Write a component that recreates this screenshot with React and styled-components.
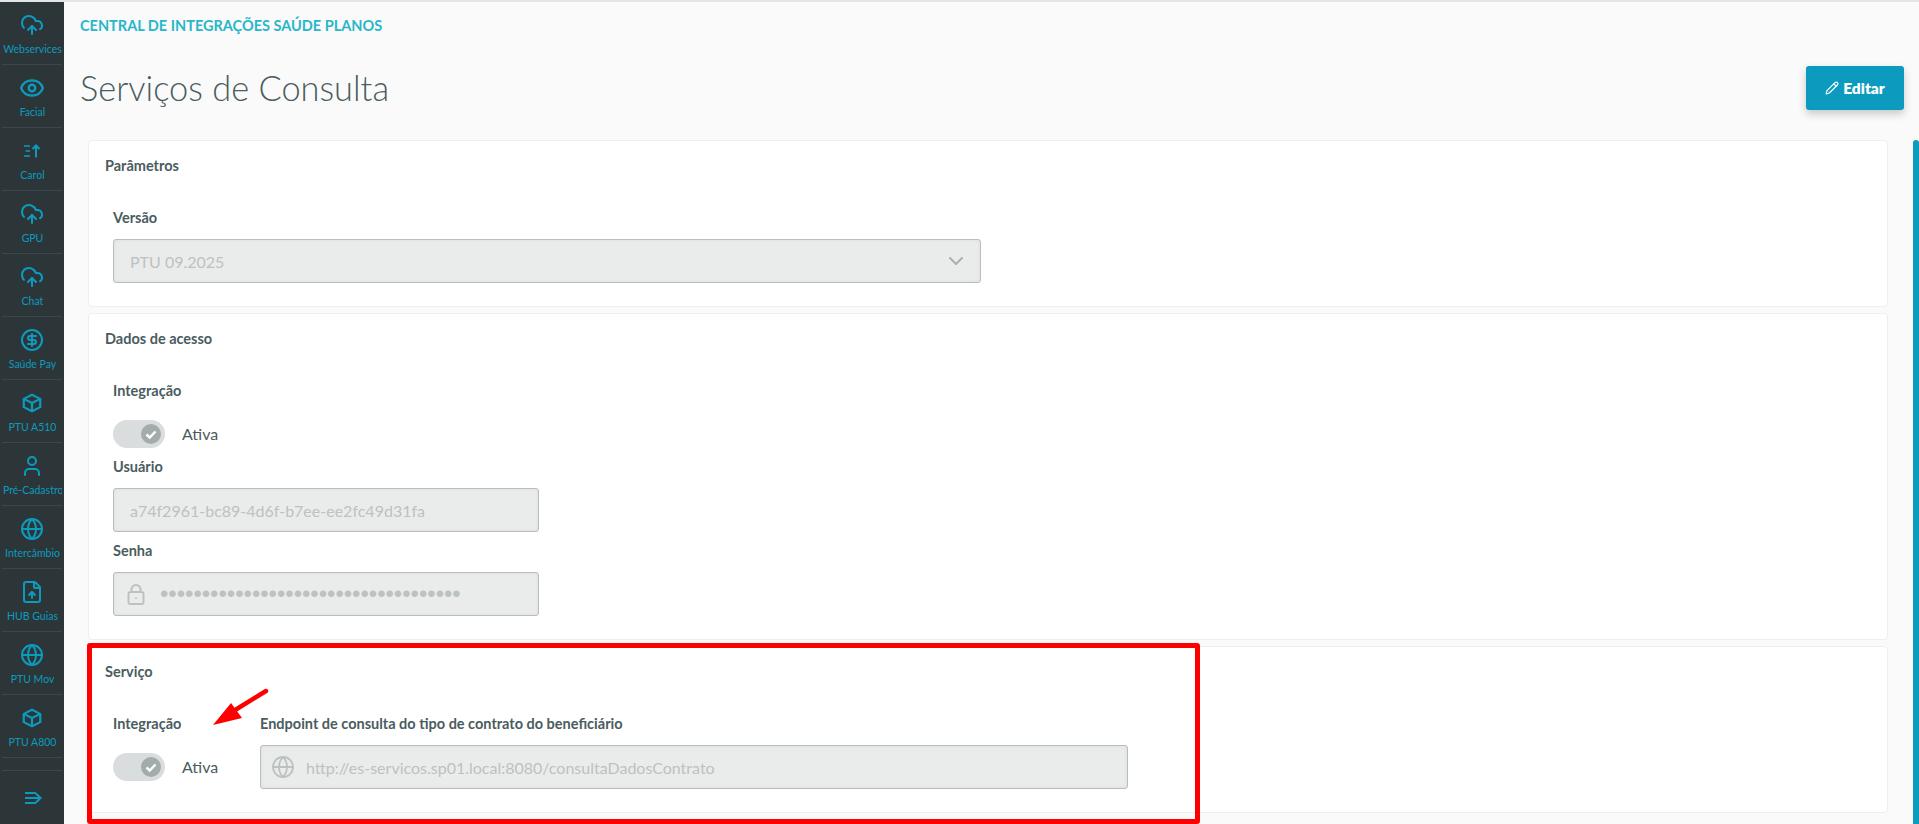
import React from "react";
import styled, { createGlobalStyle } from "styled-components";
import { CloudUpload, Eye, CircleDollarSign, User, Globe, FileUp, Pencil, ChevronDown } from "lucide-react";

const GlobalStyle = createGlobalStyle`
  html, body { margin: 0; padding: 0; height: 100%; overflow: hidden; }
  body { font-family: "Lato", "Open Sans", sans-serif; background: #fafafa; color: #4a5c60; }
  * { box-sizing: border-box; }
`;

const Page = styled.div`
  height: 100vh;
  display: flex;
  flex-direction: column;
  overflow: hidden;
  position: relative;
`;

const TopLine = styled.div`
  height: 2px;
  flex: none;
  background: #e4e6e6;
`;

const Body = styled.div`
  flex: 1;
  display: flex;
  min-height: 0;
`;

const Sidebar = styled.nav`
  width: 64px;
  flex: none;
  background: #2c3639;
  display: flex;
  flex-direction: column;
  color: #0c9abe;
`;

const NavItem = styled.a`
  height: 63px;
  flex: none;
  margin: 0 2px;
  padding-top: 11px;
  display: flex;
  flex-direction: column;
  align-items: center;
  border-bottom: 1px solid #3d4749;
  overflow: hidden;
`;

const NavIcon = styled.span`
  height: 24px;
  display: flex;
  align-items: center;
  justify-content: center;
`;

const NavLabel = styled.span`
  align-self: stretch;
  margin-top: 5px;
  padding-left: 1px;
  overflow: hidden;
  font-size: 10.5px;
  font-weight: 400;
  line-height: 14px;
  text-align: center;
  white-space: nowrap;
`;

const NavFooter = styled.div`
  margin: 12px 2px 0;
  border-top: 1px solid #3d4749;
  flex: 1;
  display: flex;
  align-items: center;
  justify-content: center;
  padding-left: 3px;
`;

const Main = styled.main`
  flex: 1;
  min-width: 0;
  padding: 0 9px 0 16px;
`;

const Breadcrumb = styled.div`
  height: 46px;
  display: flex;
  align-items: center;
  font-size: 14.5px;
  font-weight: 700;
  color: #29b6c9;
`;

const HeaderRow = styled.header`
  height: 92px;
  display: flex;
  align-items: flex-start;
  justify-content: space-between;
`;

const Title = styled.h1`
  margin: 18px 0 0;
  font-size: 34.4px;
  font-weight: 300;
  line-height: 44px;
  color: #4a5c60;
`;

const EditButton = styled.button`
  height: 44px;
  width: 98px;
  margin-top: 18px;
  border: 0;
  border-radius: 3px;
  background: #0c9abe;
  color: #fff;
  font: 800 15.5px "Lato", sans-serif;
  display: flex;
  align-items: center;
  justify-content: center;
  gap: 4px;
  box-shadow: 0 4px 8px rgba(0, 0, 0, 0.2);
`;

const Cards = styled.div`
  margin: 0 16px 0 8px;
  display: flex;
  flex-direction: column;
  gap: 6px;
`;

const Card = styled.section`
  height: ${(p) => p.$height}px;
  background: #fff;
  border: 1px solid #eeeeee;
  border-radius: 4px;
  padding: 15px 16px;
`;

const CardTitle = styled.h2`
  margin: 0 0 32px;
  font-size: 14.5px;
  font-weight: 700;
  line-height: 20px;
  color: #4a5c60;
`;

const Fields = styled.div`
  display: flex;
  flex-direction: column;
  padding-left: 8px;
`;

const FieldRow = styled.div`
  display: grid;
  grid-template-columns: 147px 868px;
  padding-left: 8px;
`;

const Label = styled.label`
  display: block;
  height: 20px;
  margin-bottom: ${(p) => p.$gap ?? 11}px;
  font-size: 14.5px;
  font-weight: 700;
  line-height: 20px;
  color: #4a5c60;
`;

const ToggleRow = styled.div`
  display: flex;
  align-items: center;
  gap: 17px;
  height: 28px;
  margin: ${(p) => p.$margin};
`;

const ToggleTrack = styled.span`
  width: 52px;
  height: 28px;
  border-radius: 14px;
  background: #dadddd;
  display: flex;
  align-items: center;
  justify-content: flex-end;
  padding-right: 4px;
`;

const ToggleText = styled.span`
  margin-bottom: 2px;
  font-size: 16px;
  color: #4a5c60;
`;

const DisabledBox = styled.div`
  width: ${(p) => p.$width}px;
  height: 44px;
  background: #eaecec;
  border: 1px solid #b8bdbd;
  border-radius: 3px;
  box-shadow: inset 0 0 4px rgba(0, 0, 0, 0.06);
  display: flex;
  align-items: center;
  padding: 0 16px;
  font-size: 16px;
  color: #bcc1c1;
  margin-bottom: ${(p) => p.$bottom ?? 0}px;
`;

const BoxIcon = styled.span`
  display: flex;
  margin: 0 ${(p) => p.$after}px 0 ${(p) => p.$before}px;
  color: #bcc1c1;
`;

const BoxEnd = styled.span`
  margin: 0 -4px 0 auto;
  display: flex;
  color: #a8b0b0;
`;

const Dots = styled.span`
  font-family: "Liberation Sans", sans-serif;
  font-size: 24px;
  line-height: 24px;
  letter-spacing: -0.05px;
`;

const ScrollThumb = styled.div`
  width: 6px;
  flex: none;
  margin-top: 138px;
  background: #0c9abe;
  border-radius: 3px 3px 0 0;
`;

const Highlight = styled.div`
  position: absolute;
  left: 87px;
  top: 643px;
  width: 1113px;
  height: 181px;
  border: 5px solid #ff0000;
  border-radius: 3px;
  pointer-events: none;
`;

const ArrowMark = styled.svg`
  position: absolute;
  left: 205px;
  top: 685px;
  pointer-events: none;
`;

const CubeIcon = () => (
  <svg width="22" height="22" viewBox="0 0 24 24" fill="none" stroke="currentColor" strokeWidth="2.4" strokeLinejoin="round">
    <path d="M12 3 3 7.5v9L12 21l9-4.5v-9L12 3Z" />
    <path d="M3 7.5 12 12l9-4.5M12 12v9" />
  </svg>
);

const ListUpIcon = () => (
  <svg width="18" height="14" viewBox="0 0 18 14" fill="none" stroke="currentColor" strokeWidth="1.7">
    <path d="M1 2h6M2.5 7h4.5M1 12h6" />
    <path d="M13 13.5V1.5M9.5 5l3.5-3.5L16.5 5" strokeWidth="2" />
  </svg>
);

const CheckKnob = () => (
  <svg width="20" height="20" viewBox="0 0 20 20">
    <circle cx="10" cy="10" r="10" fill="#a3abab" />
    <path d="M5.5 10.5 8.7 13.5 14.5 7.5" fill="none" stroke="#fff" strokeWidth="2.4" />
  </svg>
);

const ExpandIcon = () => (
  <svg width="17" height="14" viewBox="0 0 17 14" fill="none" stroke="currentColor" strokeWidth="2">
    <path d="M0 2h11M0 7h15M0 12h11M11 2.5 15.5 7 11 11.5" />
  </svg>
);

const LockIcon = () => (
  <svg width="18" height="21" viewBox="0 0 18 21" fill="none" stroke="currentColor" strokeWidth="2">
    <rect x="1.5" y="8" width="15" height="12" rx="2" />
    <path d="M4.5 8V5.5a4.5 4.5 0 0 1 9 0V8" />
    <circle cx="9" cy="14" r="1" fill="currentColor" stroke="none" />
  </svg>
);

const Toggle = ({ margin }) => (
  <ToggleRow $margin={margin}>
    <ToggleTrack>
      <CheckKnob />
    </ToggleTrack>
    <ToggleText>Ativa</ToggleText>
  </ToggleRow>
);

const navItems = [
  { label: "Webservices", icon: <CloudUpload size={24} /> },
  { label: "Facial", icon: <Eye size={26} strokeWidth={2.2} /> },
  { label: "Carol", icon: <ListUpIcon /> },
  { label: "GPU", icon: <CloudUpload size={24} /> },
  { label: "Chat", icon: <CloudUpload size={24} /> },
  { label: "Saúde Pay", icon: <CircleDollarSign size={24} /> },
  { label: "PTU A510", icon: <CubeIcon /> },
  { label: "Pré-Cadastro", icon: <User size={24} /> },
  { label: "Intercâmbio", icon: <Globe size={24} /> },
  { label: "HUB Guias", icon: <FileUp size={24} /> },
  { label: "PTU Mov", icon: <Globe size={24} /> },
  { label: "PTU A800", icon: <CubeIcon /> },
];

export default function App() {
  return (
    <Page>
      <GlobalStyle />
      <TopLine />
      <Body>
        <Sidebar>
          {navItems.map((item) => (
            <NavItem key={item.label}>
              <NavIcon>{item.icon}</NavIcon>
              <NavLabel>{item.label}</NavLabel>
            </NavItem>
          ))}
          <NavFooter>
            <ExpandIcon />
          </NavFooter>
        </Sidebar>
        <Main>
          <Breadcrumb>CENTRAL DE INTEGRAÇÕES SAÚDE PLANOS</Breadcrumb>
          <HeaderRow>
            <Title>Serviços de Consulta</Title>
            <EditButton>
              <Pencil size={14} strokeWidth={2} />
              Editar
            </EditButton>
          </HeaderRow>
          <Cards>
            <Card $height={167}>
              <CardTitle>Parâmetros</CardTitle>
              <Fields>
                <Label>Versão</Label>
                <DisabledBox $width={868}>
                  PTU 09.2025
                  <BoxEnd>
                    <ChevronDown size={24} />
                  </BoxEnd>
                </DisabledBox>
              </Fields>
            </Card>
            <Card $height={327}>
              <CardTitle>Dados de acesso</CardTitle>
              <Fields>
                <Label $gap={19}>Integração</Label>
                <Toggle margin="0 0 9px" />
                <Label>Usuário</Label>
                <DisabledBox $width={426} $bottom={9}>
                  a74f2961-bc89-4d6f-b7ee-ee2fc49d31fa
                </DisabledBox>
                <Label>Senha</Label>
                <DisabledBox $width={426}>
                  <BoxIcon $before={-3} $after={15}>
                    <LockIcon />
                  </BoxIcon>
                  <Dots>••••••••••••••••••••••••••••••••••••</Dots>
                </DisabledBox>
              </Fields>
            </Card>
            <Card $height={167}>
              <CardTitle>Serviço</CardTitle>
              <FieldRow>
                <div>
                  <Label $gap={19}>Integração</Label>
                  <Toggle />
                </div>
                <div>
                  <Label>Endpoint de consulta do tipo de contrato do beneficiário</Label>
                  <DisabledBox $width={868}>
                    <BoxIcon $before={-6} $after={11}>
                      <Globe size={24} strokeWidth={1.8} />
                    </BoxIcon>
                    http://es-servicos.sp01.local:8080/consultaDadosContrato
                  </DisabledBox>
                </div>
              </FieldRow>
            </Card>
          </Cards>
        </Main>
        <ScrollThumb />
      </Body>
      <Highlight />
      <ArrowMark width="70" height="50" viewBox="0 0 70 50">
        <path d="M61 6 22 30" fill="none" stroke="#ff0000" strokeWidth="4.5" strokeLinecap="round" />
        <path d="M8 40 26 18 37 33Z" fill="#ff0000" />
      </ArrowMark>
    </Page>
  );
}
